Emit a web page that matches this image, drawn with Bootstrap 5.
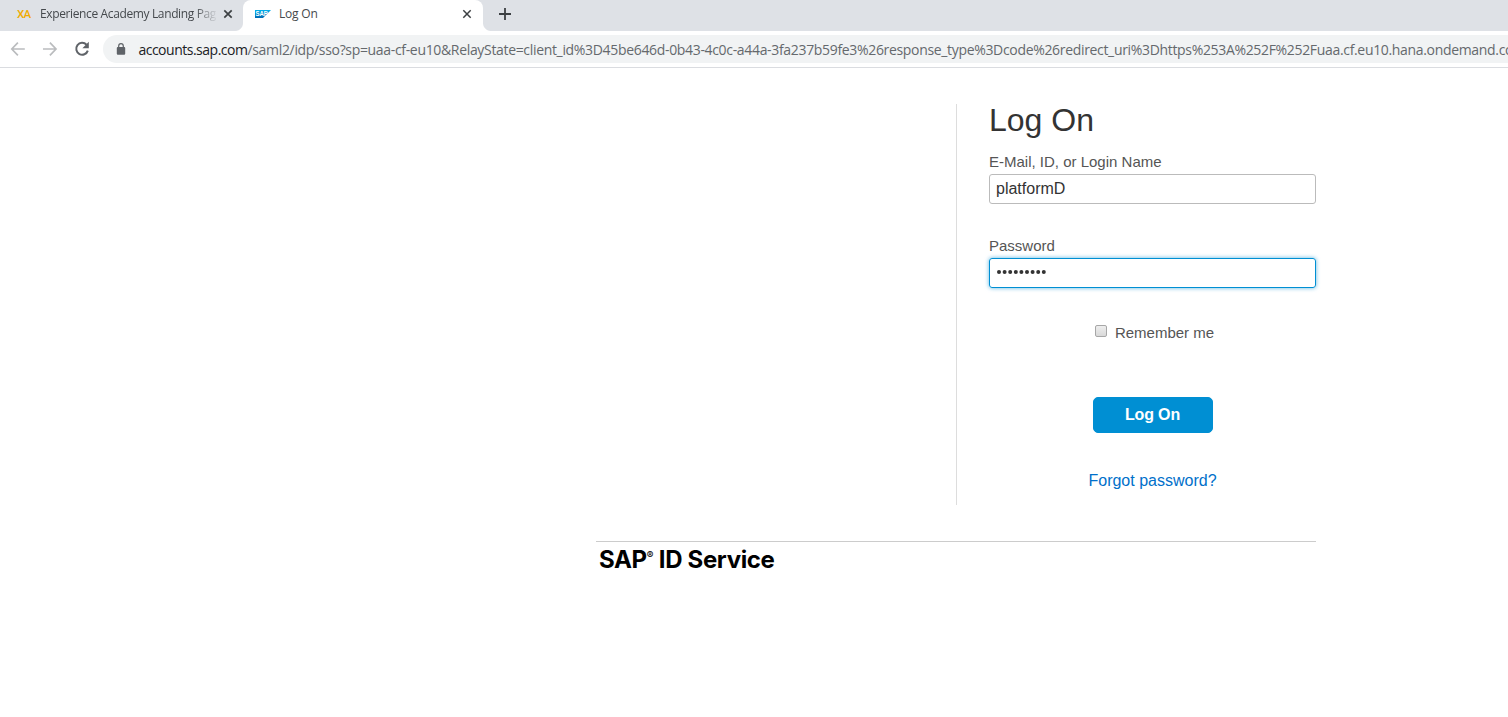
<!DOCTYPE html>
<html lang="en">
<head>
<meta charset="utf-8">
<meta name="viewport" content="width=device-width, initial-scale=1">
<title>Log On</title>
<link href="https://cdn.jsdelivr.net/npm/bootstrap@5.3.0/dist/css/bootstrap.min.css" rel="stylesheet">
<style>
body{font-family:"Liberation Sans",Arial,sans-serif;color:#333;background:#fff;height:100vh}
.chrome-ui{font-family:"Open Sans","Noto Sans",sans-serif}
.tab-strip{height:31px;background:#dee1e6;font-size:12px;line-height:28px;color:#45494d}
.tab-item{height:31px}
.tab-first{width:243px;padding-left:17px;border-bottom-right-radius:8px}
.tab-current{width:240px;padding-left:12px;background:#fff;border-radius:8px 8px 0 0}
.tab-first .tab-title{width:176px;margin-left:9px;letter-spacing:-.37px;-webkit-mask-image:linear-gradient(90deg,#000 155px,transparent 178px);mask-image:linear-gradient(90deg,#000 155px,transparent 178px)}
.tab-current .tab-title{width:178px;margin-left:8px;letter-spacing:-.2px}
.tab-foot{width:8px;height:8px;bottom:0}
.foot-left{left:-8px;background:radial-gradient(circle at 0 0,#dee1e6 7.5px,#fff 8.5px)}
.foot-right{right:-8px;background:radial-gradient(circle at 100% 0,#dee1e6 7.5px,#fff 8.5px)}
.xa-icon{font-family:Roboto,sans-serif;font-size:11.5px;font-weight:500;color:#f0ab00;letter-spacing:-.7px;width:14px}
.toolbar{height:37px;border-bottom:1px solid #dadce0;padding:4px 0 4px 10px}
.omnibox{height:28px;background:#f1f3f4;border-radius:14px 0 0 14px;margin-left:14px;padding-left:13px;font-size:14px;line-height:28px;color:#65696d}
.address{margin-left:12px;padding-top:1px;letter-spacing:-.33px}
.address b{font-weight:400;color:#202124;letter-spacing:-.49px}
.id-page{width:720px;margin-left:596px;padding-top:36px}
.logon-pane{width:360px;height:401px;border-left:1px solid #ddd;padding-left:32px}
.logon-pane h1{font-size:32px;line-height:32px;font-weight:400;color:#333;margin-bottom:16px}
.field-label{font-size:15px;line-height:20px;color:#555;margin-bottom:2px;display:block}
.field-box{height:30px;border:1px solid #bbb;border-radius:3px;padding:1px 6px 1px;font-size:16px;color:#333;line-height:27px}
.field-box:focus,.pass-box{border-color:#008fd3;box-shadow:0 0 4px rgba(0,143,211,.65)}
.pass-box{font-size:16px;display:flex;align-items:center;padding-bottom:3px}
.remember{margin-top:35px;font-size:15px;line-height:20px;color:#555;padding-left:4px}
.remember-box{width:12px;height:12px;border:1px solid #a7a7a7;border-radius:2px;background:linear-gradient(#eee,#d9d9d9);margin-bottom:4px}
.logon-btn{--bs-btn-bg:#008fd3;--bs-btn-border-color:#008fd3;--bs-btn-color:#fff;width:120px;height:36px;border-radius:5px;padding:0;font-size:16px;font-weight:700;letter-spacing:-.15px;margin-top:54px}
.forgot{font-size:16px;line-height:22px;color:#0070ca;margin-top:37px}
.id-footer{border-top:1px solid #ccc;margin-top:36px;padding-left:3px;height:40px}
.id-brand{font-family:Inter,sans-serif;font-size:24px;font-weight:700;line-height:35px;color:#000;letter-spacing:-.35px}
.id-brand sup{font-size:10px;font-weight:500;top:-9px;line-height:0;vertical-align:baseline;letter-spacing:0}
</style>
</head>
<body class="overflow-hidden">
<header class="chrome-ui">
  <div class="tab-strip d-flex">
    <div class="tab-item tab-first d-flex">
      <span class="xa-icon flex-shrink-0">XA</span>
      <span class="tab-title text-nowrap overflow-hidden">Experience Academy Landing Page</span>
      <svg class="mt-2" style="margin-left:6px" width="12" height="12" viewBox="0 0 12 12"><path d="M2.3 2.3l7.4 7.4M9.7 2.3L2.3 9.7" stroke="#3c4043" stroke-width="1.7"/></svg>
    </div>
    <div class="tab-item tab-current position-relative d-flex">
      <span class="tab-foot foot-left position-absolute"></span>
      <svg class="flex-shrink-0" style="margin-top:10px" width="16" height="8" viewBox="0 0 16 8"><defs><linearGradient id="sap" x2="0" y2="1"><stop stop-color="#00b1eb"/><stop offset="1" stop-color="#0068b4"/></linearGradient></defs><path fill="url(#sap)" d="M0 0h16L8 8H0z"/><text x=".4" y="6.4" font-family="Liberation Sans, sans-serif" font-size="7" font-weight="700" fill="#fff" textLength="12.4" lengthAdjust="spacingAndGlyphs">SAP</text></svg>
      <span class="tab-title">Log On</span>
      <svg class="mt-2" style="margin-left:4px" width="12" height="12" viewBox="0 0 12 12"><path d="M2.3 2.3l7.4 7.4M9.7 2.3L2.3 9.7" stroke="#3c4043" stroke-width="1.5"/></svg>
      <span class="tab-foot foot-right position-absolute"></span>
    </div>
    <svg class="mt-2" style="margin-left:16px" width="12" height="12" viewBox="0 0 12 12"><path d="M6 0v12M0 6h12" stroke="#3c4043" stroke-width="1.8"/></svg>
  </div>
  <div class="toolbar d-flex align-items-center">
    <svg width="16" height="16" viewBox="0 0 16 16" fill="none" stroke="#babcbe" stroke-width="1.7"><path d="M15 8H2M8 1.5L1.8 8 8 14.5"/></svg>
    <svg class="ms-3" width="16" height="16" viewBox="0 0 16 16" fill="none" stroke="#babcbe" stroke-width="1.7"><path d="M1 8h13M8 1.5L14.2 8 8 14.5"/></svg>
    <svg class="ms-3" width="16" height="16" viewBox="0 0 16 16"><path d="M12.7 3.7A6 6 0 1 0 14 9.6" fill="none" stroke="#5f6368" stroke-width="2"/><path d="M15 .7v6.5H8.5z" fill="#5f6368"/></svg>
    <div class="omnibox flex-grow-1 d-flex align-items-center overflow-hidden">
      <svg class="flex-shrink-0" width="10" height="12" viewBox="0 0 10 12"><rect x=".8" y="4" width="8.4" height="7.7" rx="1" fill="#5f6368"/><path d="M2.7 5V3a2.3 2.3 0 0 1 4.6 0v2" fill="none" stroke="#5f6368" stroke-width="1.2"/></svg>
      <span class="address text-nowrap"><b>accounts.sap.com</b>/saml2/idp/sso?sp=uaa-cf-eu10&amp;RelayState=client_id%3D45be646d-0b43-4c0c-a44a-3fa237b59fe3%26response_type%3Dcode%26redirect_uri%3Dhttps%253A%252F%252Fuaa.cf.eu10.hana.ondemand.com</span>
    </div>
  </div>
</header>
<main class="id-page">
  <section class="logon-pane ms-auto">
    <h1>Log On</h1>
    <label class="field-label" for="login">E-Mail, ID, or Login Name</label>
    <input id="login" class="field-box w-100 d-block" type="text" value="platformD">
    <label class="field-label" for="pass" style="margin-top:32px">Password</label>
    <div id="pass" class="field-box pass-box">
      <svg width="52" height="6" viewBox="0 0 52 6" fill="#333"><circle cx="3" cy="3" r="2"/><circle cx="8.6" cy="3" r="2"/><circle cx="14.2" cy="3" r="2"/><circle cx="19.8" cy="3" r="2"/><circle cx="25.4" cy="3" r="2"/><circle cx="31" cy="3" r="2"/><circle cx="36.6" cy="3" r="2"/><circle cx="42.2" cy="3" r="2"/><circle cx="47.8" cy="3" r="2"/></svg>
    </div>
    <div class="remember d-flex justify-content-center align-items-center"><span class="remember-box me-2"></span><span>Remember me</span></div>
    <button class="btn logon-btn d-block mx-auto">Log On</button>
    <div class="forgot text-center">Forgot password?</div>
  </section>
  <footer class="id-footer"><div class="id-brand">SAP<sup>®</sup> ID Service</div></footer>
</main>
<script src="https://cdn.jsdelivr.net/npm/bootstrap@5.3.0/dist/js/bootstrap.bundle.min.js"></script>
</body>
</html>
